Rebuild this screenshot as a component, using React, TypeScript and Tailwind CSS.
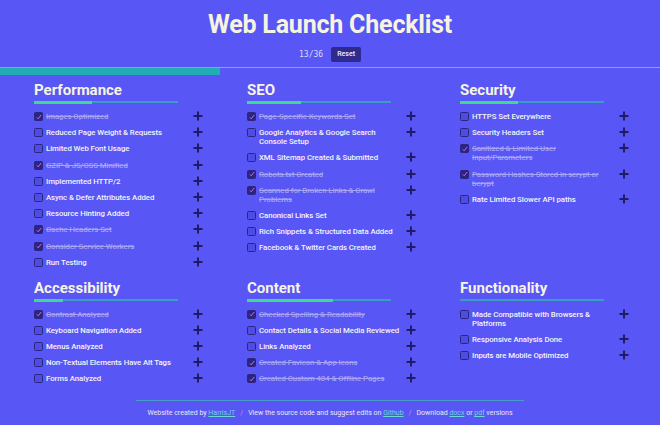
import React from 'react';

interface Item {
  label: string;
  done?: boolean;
}

interface Section {
  title: string;
  items: Item[];
}

const sections: Section[] = [
  {
    title: 'Performance',
    items: [
      { label: 'Images Optimized', done: true },
      { label: 'Reduced Page Weight & Requests' },
      { label: 'Limited Web Font Usage' },
      { label: 'GZIP & JS/CSS Minified', done: true },
      { label: 'Implemented HTTP/2' },
      { label: 'Async & Defer Attributes Added' },
      { label: 'Resource Hinting Added' },
      { label: 'Cache Headers Set', done: true },
      { label: 'Consider Service Workers', done: true },
      { label: 'Run Testing' },
    ],
  },
  {
    title: 'SEO',
    items: [
      { label: 'Page-Specific Keywords Set', done: true },
      { label: 'Google Analytics & Google Search Console Setup' },
      { label: 'XML Sitemap Created & Submitted' },
      { label: 'Robots.txt Created', done: true },
      { label: 'Scanned for Broken Links & Crawl Problems', done: true },
      { label: 'Canonical Links Set' },
      { label: 'Rich Snippets & Structured Data Added' },
      { label: 'Facebook & Twitter Cards Created' },
    ],
  },
  {
    title: 'Security',
    items: [
      { label: 'HTTPS Set Everywhere' },
      { label: 'Security Headers Set' },
      { label: 'Sanitized & Limited User Input/Parameters', done: true },
      { label: 'Password Hashes Stored in scrypt or bcrypt', done: true },
      { label: 'Rate Limited Slower API paths' },
    ],
  },
  {
    title: 'Accessibility',
    items: [
      { label: 'Contrast Analyzed', done: true },
      { label: 'Keyboard Navigation Added' },
      { label: 'Menus Analyzed' },
      { label: 'Non-Textual Elements Have Alt Tags' },
      { label: 'Forms Analyzed' },
    ],
  },
  {
    title: 'Content',
    items: [
      { label: 'Checked Spelling & Readability', done: true },
      { label: 'Contact Details & Social Media Reviewed' },
      { label: 'Links Analyzed' },
      { label: 'Created Favicon & App Icons', done: true },
      { label: 'Created Custom 404 & Offline Pages', done: true },
    ],
  },
  {
    title: 'Functionality',
    items: [
      { label: 'Made Compatible with Browsers & Platforms' },
      { label: 'Responsive Analysis Done' },
      { label: 'Inputs are Mobile Optimized' },
    ],
  },
];

function PlusIcon() {
  return (
    <svg className="h-[10px] w-[10px] shrink-0" viewBox="0 0 10 10" fill="none">
      <path d="M5 0.5v9M0.5 5h9" stroke="#1f1c63" strokeWidth="2" />
    </svg>
  );
}

function CheckRow({ item }: { item: Item }) {
  return (
    <li className="flex items-start">
      <span
        className={`flex h-[9px] w-[9px] shrink-0 items-center justify-center rounded-[1.5px] border border-[#2a2680] ${
          item.done ? 'bg-[#2a2680]' : 'bg-[#4f4ce6]'
        }`}
      >
        {item.done && (
          <svg className="h-[6px] w-[6px]" viewBox="0 0 6 6" fill="none">
            <path d="M0.8 3.4l1.4 1.4L5.2 1" stroke="#d563e8" strokeWidth="1" />
          </svg>
        )}
      </span>
      <span
        className={`ml-[3px] mr-[2px] min-w-0 flex-1 text-[7.8px] leading-[9px] font-medium tracking-[-0.06px] ${
          item.done ? 'text-[#a7a4f6] line-through' : 'text-[#f4f4f8]'
        }`}
      >
        {item.label}
      </span>
      <span className="mt-[-1px]">
        <PlusIcon />
      </span>
    </li>
  );
}

function SectionBlock({ section }: { section: Section }) {
  const done = section.items.filter((i) => i.done).length;
  const pct = (done / section.items.length) * 100;
  return (
    <div className="w-[169px]">
      <h2 className="text-[15px] leading-[18px] font-bold text-[#f6f4e4]">{section.title}</h2>
      <div className="mt-[2px] h-[2px] w-[144px] bg-[#3a9ec4]">
        <div className="h-[3px] bg-[#3fdb8c]" style={{ width: `${pct}%` }} />
      </div>
      <ul className="mt-[9px] flex flex-col gap-[7.2px]">
        {section.items.map((item) => (
          <CheckRow key={item.label} item={item} />
        ))}
      </ul>
    </div>
  );
}

export default function App() {
  return (
    <div
      className="min-h-[425px] w-[660px] overflow-hidden bg-[#5856f5]"
      style={{ fontFamily: 'Roboto, "Liberation Sans", sans-serif' }}
    >
      <header className="flex flex-col items-center pt-[10px]">
        <h1 className="text-[25px] leading-[30px] font-bold tracking-[-0.2px] text-[#f6f4e0]">
          Web Launch Checklist
        </h1>
        <div className="mt-[7px] flex items-center gap-[8px]">
          <span className="text-[8px] text-[#dcdcf6]" style={{ fontFamily: '"DejaVu Sans Mono", monospace' }}>
            13/36
          </span>
          <button className="h-[15px] rounded-[2px] bg-[#2e2a8e] px-[6px] text-[7px] font-medium text-[#eeeefc]">
            Reset
          </button>
        </div>
      </header>

      <div className="mt-[5px] h-[8px] border-t border-[#3fd1b0]">
        <div className="h-[7px] w-[220px] bg-[#21adb3]" />
      </div>

      <main className="grid grid-cols-[repeat(3,169px)] gap-x-[44px] gap-y-[12px] pl-[34px] pt-[6px]">
        {sections.map((s) => (
          <SectionBlock key={s.title} section={s} />
        ))}
      </main>

      <footer className="mx-auto mt-[17px] w-[388px] border-t border-[#4a9cc8] pt-[7px] text-center text-[7px] text-[#e8e8f6]">
        Website created by <a className="text-[#6ad6d6] underline">HarrisJT</a>
        <span className="mx-[5px] text-[#e27ae6]">/</span>
        View the source code and suggest edits on <a className="text-[#6ad6d6] underline">Github</a>
        <span className="mx-[5px] text-[#e27ae6]">/</span>
        Download <a className="text-[#6ad6d6] underline">docx</a> or{' '}
        <a className="text-[#6ad6d6] underline">pdf</a> versions
      </footer>
    </div>
  );
}
